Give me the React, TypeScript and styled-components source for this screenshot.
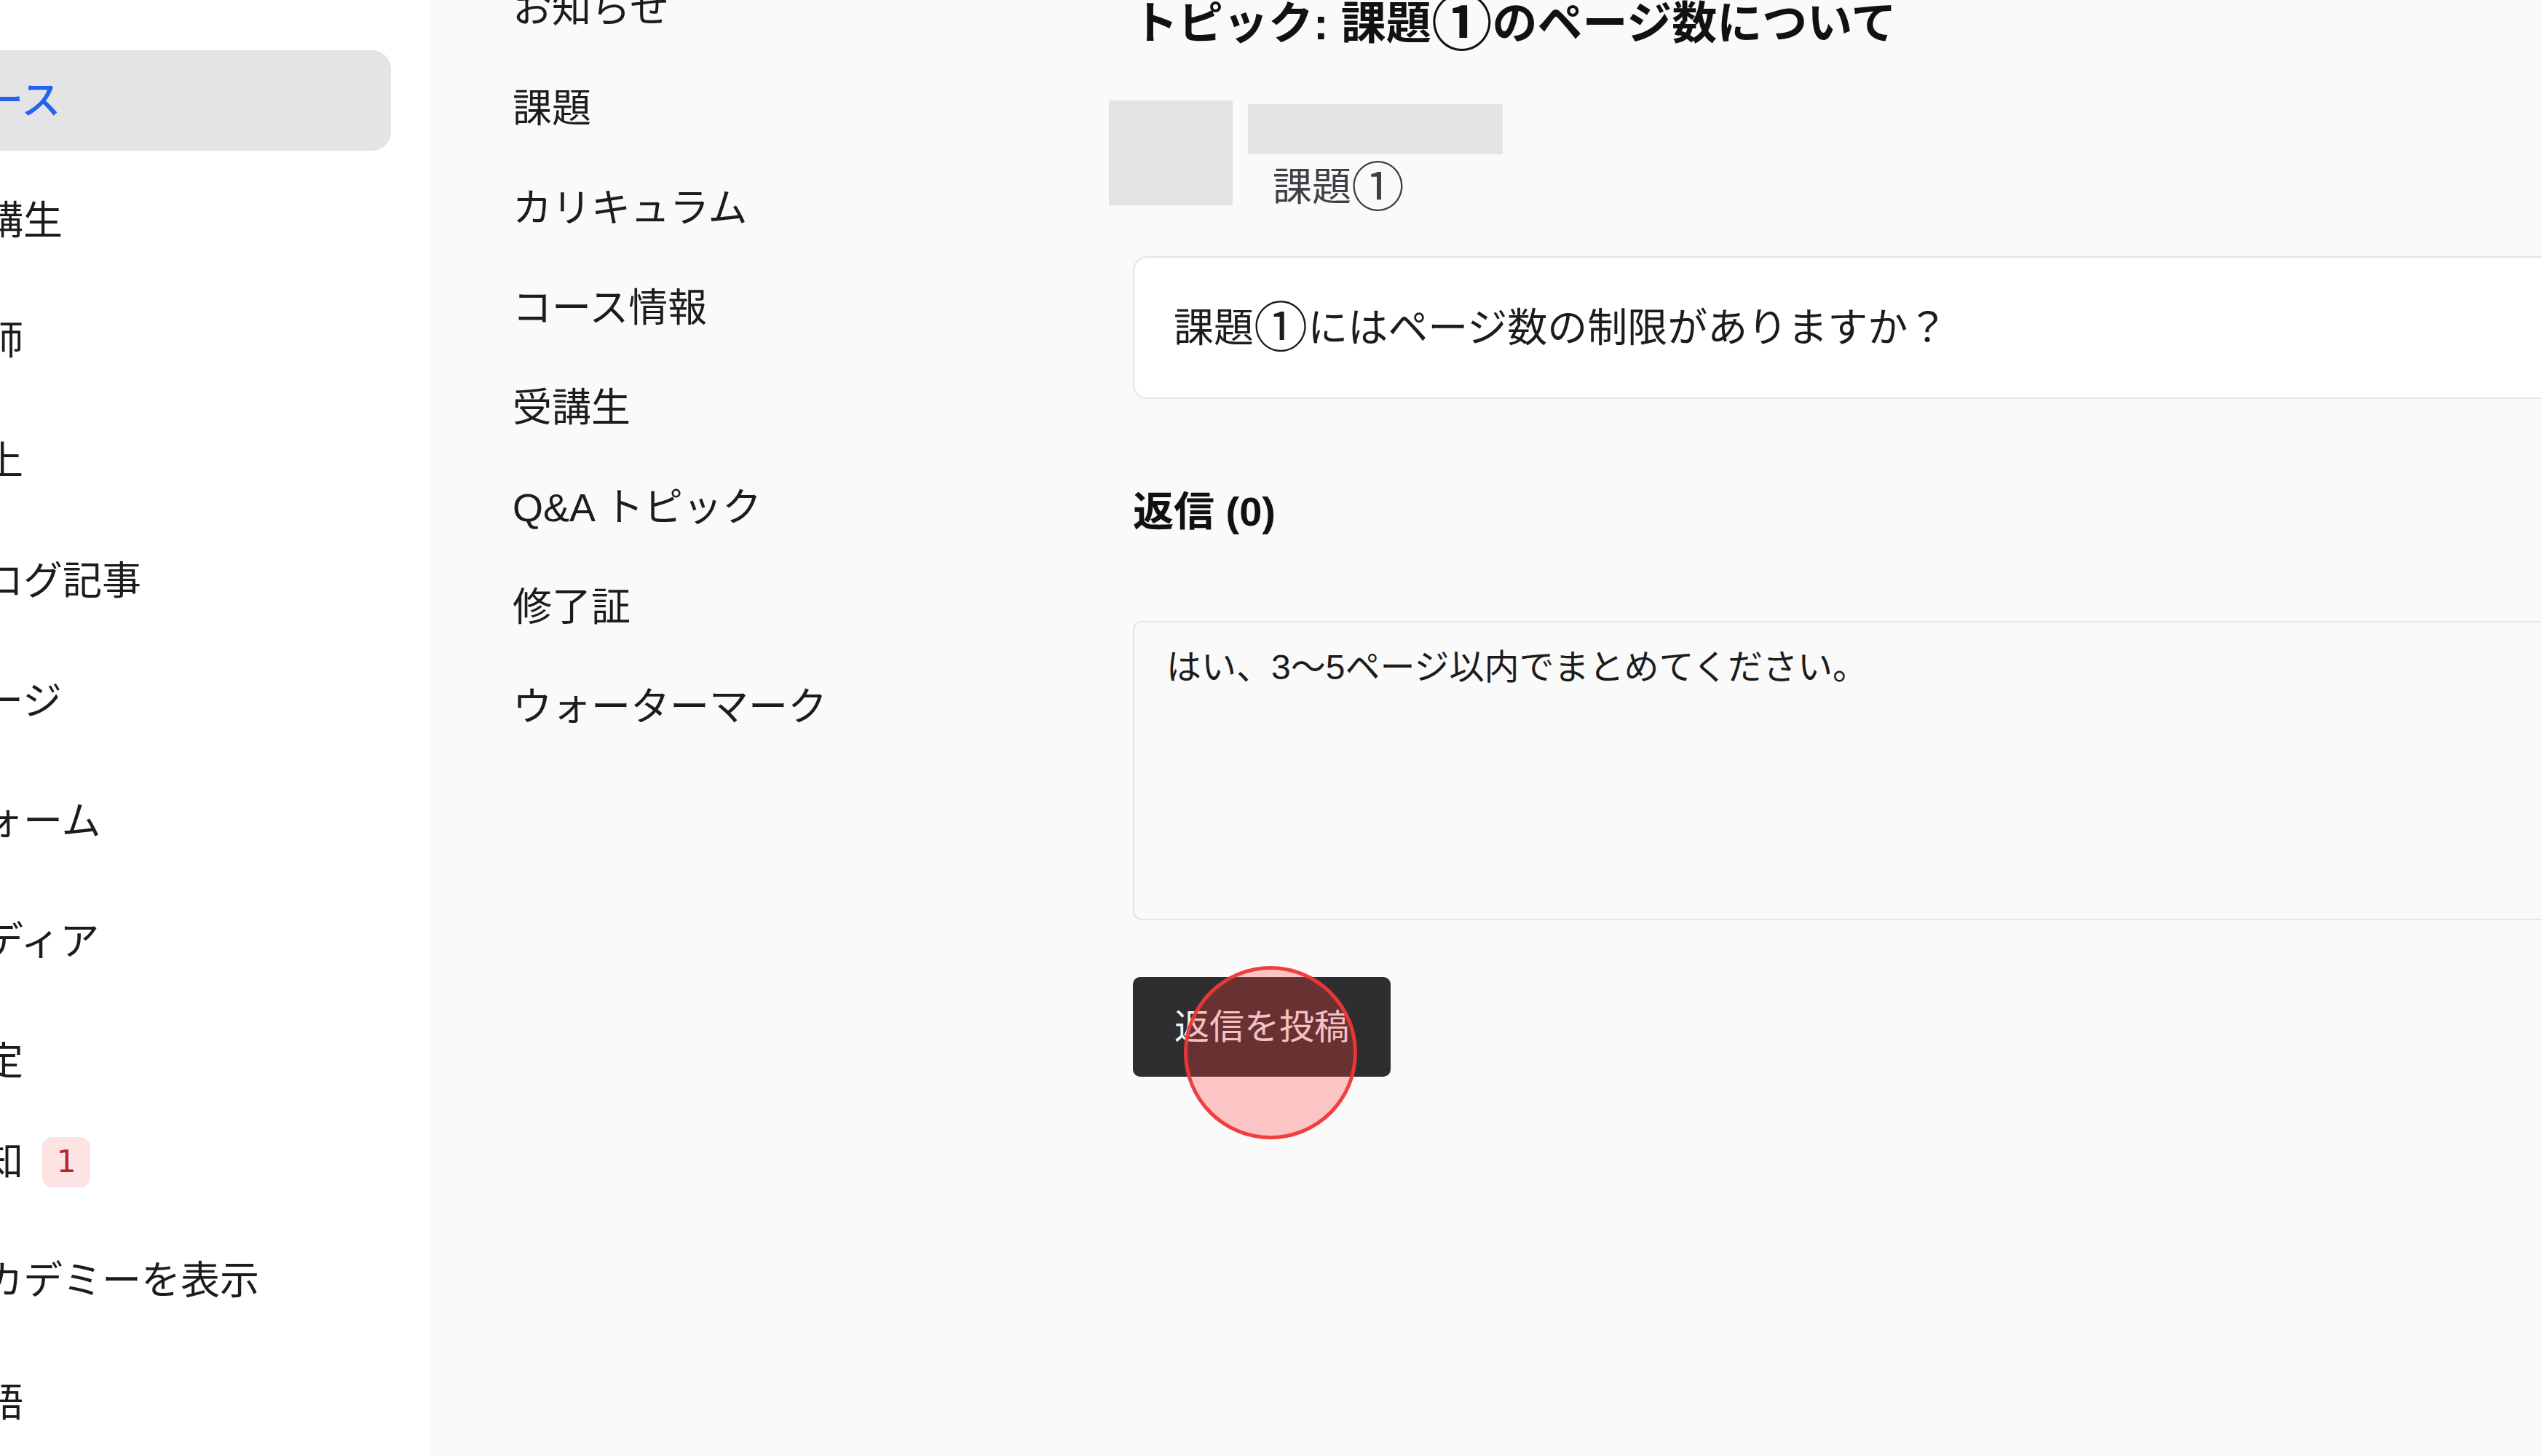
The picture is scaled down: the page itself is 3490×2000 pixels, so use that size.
import React from "react";
import styled, { createGlobalStyle } from "styled-components";

type SideEntry = {
  label: string;
  gap: number;
  active?: boolean;
  badge?: number;
};

const sideNav: SideEntry[] = [
  { label: "コース", gap: 0, active: true },
  { label: "受講生", gap: 27 },
  { label: "講師", gap: 27 },
  { label: "売上", gap: 27 },
  { label: "ブログ記事", gap: 27 },
  { label: "ページ", gap: 27 },
  { label: "フォーム", gap: 27 },
  { label: "メディア", gap: 27 },
  { label: "設定", gap: 27 },
  { label: "通知", gap: 0, badge: 1 },
  { label: "アカデミーを表示", gap: 25 },
  { label: "言語", gap: 30 },
];

const courseMenu = [
  "お知らせ",
  "課題",
  "カリキュラム",
  "コース情報",
  "受講生",
  "Q&A トピック",
  "修了証",
  "ウォーターマーク",
];

const App = () => {
  return (
    <>
      <GlobalStyle />
      <Page>
        <Sidebar>
          <SideNav>
            {sideNav.map((item) => (
              <SideItem key={item.label} $active={item.active} $gap={item.gap}>
                <span>{item.label}</span>
                {item.badge !== undefined && <Badge>{item.badge}</Badge>}
              </SideItem>
            ))}
          </SideNav>
        </Sidebar>

        <CourseMenu>
          {courseMenu.map((label) => (
            <CourseMenuItem key={label}>{label}</CourseMenuItem>
          ))}
        </CourseMenu>

        <Main>
          <Title>
            トピック: 課題<Circled>①</Circled>のページ数について
          </Title>

          <AuthorRow>
            <Avatar />
            <AuthorMeta>
              <NameBar />
              <AuthorTopic>
                課題<Circled>①</Circled>
              </AuthorTopic>
            </AuthorMeta>
          </AuthorRow>

          <QuestionCard>
            <span>
              課題<Circled>①</Circled>にはページ数の制限がありますか？
            </span>
          </QuestionCard>

          <RepliesTitle>返信 (0)</RepliesTitle>

          <ReplyBox
            readOnly
            value="はい、3〜5ページ以内でまとめてください。"
          />

          <ButtonWrap>
            <PostButton type="button">返信を投稿</PostButton>
            <ClickMark />
          </ButtonWrap>
        </Main>
      </Page>
    </>
  );
};

export default App;

const GlobalStyle = createGlobalStyle`
  * {
    box-sizing: border-box;
  }

  html,
  body {
    margin: 0;
    padding: 0;
    overflow: hidden;
    background: #fafafa;
  }

  body {
    font-family: "Liberation Sans", "Noto Sans CJK JP", sans-serif;
    color: #1c1c1c;
  }
`;

const Page = styled.div`
  display: flex;
  width: 100vw;
  height: 100vh;
  overflow: hidden;
  background: #fafafa;
`;

const Sidebar = styled.aside`
  flex: 0 0 592px;
  background: #ffffff;
  overflow: hidden;
`;

const SideNav = styled.nav`
  display: flex;
  flex-direction: column;
  margin: 69px 55px 0 -130px;
`;

const SideItem = styled.div<{ $active?: boolean; $gap: number }>`
  display: flex;
  align-items: center;
  gap: 26px;
  height: 138px;
  margin-top: ${(p) => p.$gap}px;
  padding-left: 54px;
  border-radius: 26px;
  background: ${(p) => (p.$active ? "#e4e4e7" : "transparent")};
  color: ${(p) => (p.$active ? "#2563eb" : "#1c1c1c")};
  font-size: 54px;
  font-weight: ${(p) => (p.$active ? 500 : 400)};
  line-height: 81px;
  white-space: nowrap;
`;

const Badge = styled.span`
  display: flex;
  align-items: center;
  justify-content: center;
  width: 66px;
  height: 69px;
  border-radius: 14px;
  background: #fde3e3;
  color: #b42525;
  font-family: "DejaVu Sans", sans-serif;
  font-size: 42px;
  line-height: 1;
`;

const CourseMenu = styled.nav`
  flex: 0 0 864px;
  display: flex;
  flex-direction: column;
  margin-top: -56px;
  padding-left: 112px;
`;

const CourseMenuItem = styled.div`
  display: flex;
  align-items: center;
  height: 137px;
  font-size: 54px;
  line-height: 81px;
  color: #1c1c1c;
  white-space: nowrap;
`;

const Main = styled.main`
  flex: 0 0 2400px;
  display: flex;
  flex-direction: column;
  padding-left: 100px;
`;

const Circled = styled.span`
  font-size: 1.35em;
  line-height: 0;
  vertical-align: -0.1em;
`;

const Title = styled.h1`
  margin: -3px 0 0;
  font-size: 62px;
  font-weight: 700;
  line-height: 72px;
  color: #111111;
  white-space: nowrap;
`;

const AuthorRow = styled.div`
  display: flex;
  gap: 21px;
  margin: 69px 0 0 -33px;
`;

const Avatar = styled.div`
  width: 170px;
  height: 144px;
  background: #e4e4e7;
`;

const AuthorMeta = styled.div`
  display: flex;
  flex-direction: column;
  padding-top: 5px;
`;

const NameBar = styled.div`
  width: 350px;
  height: 69px;
  background: #e4e4e7;
`;

const AuthorTopic = styled.div`
  padding-left: 34px;
  font-size: 54px;
  line-height: 90px;
  color: #3f3f46;
`;

const QuestionCard = styled.div`
  display: flex;
  align-items: center;
  height: 196px;
  margin-top: 50px;
  padding-left: 54px;
  background: #ffffff;
  border: 2px solid #e5e5e5;
  border-radius: 20px;
  font-size: 55px;
  line-height: 81px;
  color: #1c1c1c;
  white-space: nowrap;
`;

const RepliesTitle = styled.h2`
  margin: 121px 0 0;
  font-size: 56px;
  font-weight: 700;
  line-height: 68px;
  color: #111111;
`;

const ReplyBox = styled.textarea`
  display: block;
  height: 411px;
  margin-top: 116px;
  padding: 26px 44px;
  background: #fafafa;
  border: 2px solid #e5e5e5;
  border-radius: 12px;
  font-family: "Liberation Sans", "Noto Sans CJK JP", sans-serif;
  font-size: 48px;
  line-height: 72px;
  color: #1c1c1c;
  resize: none;
  outline: none;
`;

const ButtonWrap = styled.div`
  position: relative;
  align-self: flex-start;
  margin-top: 78px;
`;

const PostButton = styled.button`
  display: flex;
  align-items: center;
  justify-content: center;
  width: 354px;
  height: 137px;
  padding: 0;
  border: none;
  border-radius: 10px;
  background: #2e2e30;
  color: #f4f4f5;
  font-family: "Liberation Sans", "Noto Sans CJK JP", sans-serif;
  font-size: 48px;
  line-height: 72px;
`;

const ClickMark = styled.span`
  position: absolute;
  left: 70px;
  top: -15px;
  width: 238px;
  height: 238px;
  border-radius: 50%;
  border: 5px solid rgba(240, 56, 56, 0.95);
  background: rgba(255, 60, 60, 0.28);
  pointer-events: none;
`;
